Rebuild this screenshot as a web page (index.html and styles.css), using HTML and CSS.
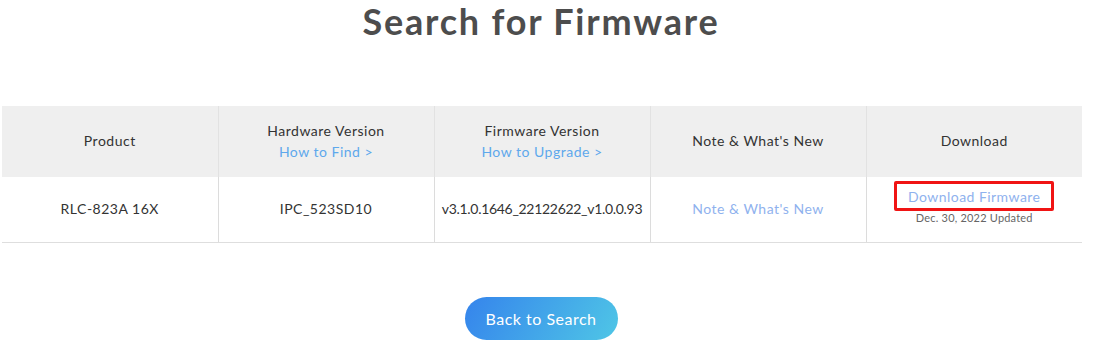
FILE: index.html
```html
<!DOCTYPE html>
<html lang="en">
<head>
<meta charset="utf-8">
<title>Search for Firmware</title>
<link rel="stylesheet" href="styles.css">
</head>
<body>
<div class="page">
  <h1 class="title">Search for Firmware</h1>
  <table class="fw-table">
    <thead>
      <tr>
        <th>Product</th>
        <th>Hardware Version<a class="sub-link" href="#">How to Find &gt;</a></th>
        <th>Firmware Version<a class="sub-link" href="#">How to Upgrade &gt;</a></th>
        <th>Note &amp; What's New</th>
        <th>Download</th>
      </tr>
    </thead>
    <tbody>
      <tr>
        <td>RLC-823A 16X</td>
        <td>IPC_523SD10</td>
        <td class="version">v3.1.0.1646_22122622_v1.0.0.93</td>
        <td><a class="row-link" href="#">Note &amp; What's New</a></td>
        <td class="dl-cell">
          <a class="row-link dl-link" href="#">Download Firmware</a>
          <span class="date">Dec. 30, 2022 Updated</span>
        </td>
      </tr>
    </tbody>
  </table>
  <div class="actions">
    <a class="back-btn" href="#">Back to Search</a>
  </div>
</div>
</body>
</html>
```

FILE: styles.css
```css
* { box-sizing: border-box; }
html, body { margin: 0; padding: 0; background: #fff; }
body {
  font-family: "Lato", "Noto Sans", sans-serif;
  color: #333;
}
.page {
  width: 1082px;
  display: flex;
  flex-direction: column;
  align-items: center;
}
.title {
  margin: 0;
  height: 106px;
  font-size: 36px;
  line-height: 42px;
  font-weight: 700;
  color: #4d4d4d;
  letter-spacing: 1.8px;
}
.fw-table {
  margin-left: 2px;
  width: 1080px;
  border-collapse: collapse;
  table-layout: fixed;
  font-size: 14px;
  letter-spacing: 0.5px;
}
.fw-table th {
  background: #efefef;
  height: 71px;
  font-weight: 400;
  color: #333;
  padding: 0 0 2px;
  line-height: 21px;
  border-right: 1px solid #e2e2e2;
}
.fw-table td {
  height: 65px;
  padding: 0 0 2px;
  text-align: center;
  color: #333;
  border-right: 1px solid #dcdcdc;
  border-bottom: 1px solid #dedede;
}
.fw-table th:last-child, .fw-table td:last-child { border-right: none; }
.fw-table td.version { letter-spacing: -0.3px; }
.fw-table td.dl-cell { padding-bottom: 13px; }
.sub-link {
  display: block;
  color: #5ea8ec;
  text-decoration: none;
}
.row-link {
  color: #8fb2ee;
  text-decoration: none;
}
.dl-link {
  display: inline-block;
  padding: 4px 11px 3px;
  border: 3px solid #f01414;
  border-radius: 2px;
  line-height: 17px;
  letter-spacing: 0.45px;
}
.date {
  display: block;
  font-size: 11px;
  color: #666;
  line-height: 14px;
  letter-spacing: 0.2px;
}
.actions {
  padding-top: 54px;
}
.back-btn {
  display: flex;
  align-items: center;
  justify-content: center;
  width: 153px;
  height: 43px;
  border-radius: 22px;
  background: linear-gradient(120deg, #3584ec 0%, #4fc6e6 100%);
  color: #fff;
  font-size: 16px;
  letter-spacing: 0.5px;
  text-decoration: none;
}
```
